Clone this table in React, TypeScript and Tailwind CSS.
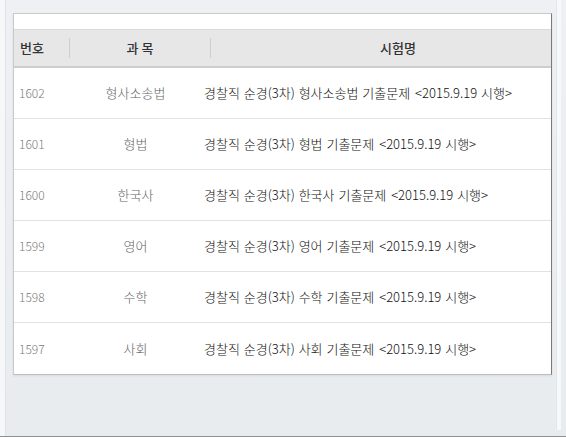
import React from "react";

const rows = [
  { no: "1602", subj: "형사소송법" },
  { no: "1601", subj: "형법" },
  { no: "1600", subj: "한국사" },
  { no: "1599", subj: "영어" },
  { no: "1598", subj: "수학" },
  { no: "1597", subj: "사회" },
];

const font = { fontFamily: '"Noto Sans CJK KR", "Noto Sans", sans-serif' };

export default function App() {
  return (
    <div
      className="w-[566px] h-[437px] bg-gradient-to-b from-[#eef0f3] to-[#e9ecef] border-b border-[#8f8f8f] flex overflow-hidden"
      style={font}
    >
      <div className="w-[6px] h-full bg-[#f6f7f9] border-r border-[#dfe2e6]" />
      <div className="flex-1 flex flex-col pt-[13px] pl-[7px]">
        <div className="flex">
          <div className="w-[539px] h-[362px] bg-white border-t border-l border-[#c9c9c9] border-r border-r-[#7a7a7a] border-b border-b-[#bdbdbd] flex flex-col overflow-hidden shadow-[0_1px_2px_rgba(0,0,0,0.08)]">
            <div className="h-[16px] shrink-0 border-b border-[#dadada]" />
            <div className="h-[38px] shrink-0 bg-[#e7e7e7] border-b-2 border-[#cdcdcd] flex items-center text-[13px] font-medium text-[#333]">
              <div className="w-[55px] pl-[6px] shrink-0">번호</div>
              <div className="w-[141px] shrink-0 h-full flex items-center justify-center border-l border-[#d0d0d0] [border-image:linear-gradient(to_bottom,transparent_25%,#cfcfcf_25%,#cfcfcf_75%,transparent_75%)_1]">
                과 목
              </div>
              <div className="flex-1 h-full flex items-center justify-center pl-[34px] border-l border-[#d0d0d0] [border-image:linear-gradient(to_bottom,transparent_25%,#cfcfcf_25%,#cfcfcf_75%,transparent_75%)_1]">
                시험명
              </div>
            </div>
            {rows.map((r, i) => (
              <div
                key={r.no}
                className={`h-[51px] shrink-0 flex items-center font-light ${i < rows.length - 1 ? "border-b border-[#e2e2e2]" : ""}`}
              >
                <div className="w-[55px] pl-[5px] shrink-0 text-[12px] text-[#7a7a7a]">{r.no}</div>
                <div className="w-[133px] shrink-0 text-center text-[13px] text-[#666]">{r.subj}</div>
                <div className="flex-1 pl-[2px] text-[13px] text-[#111] whitespace-nowrap [word-spacing:1px]">
                  경찰직 순경(3차) {r.subj} 기출문제 <span className="ml-[1px]">&lt;2015.9.19 시행&gt;</span>
                </div>
              </div>
            ))}
          </div>
          <div className="w-[4px]" />
          <div className="w-[5px] h-[430px] -mt-[13px] bg-[#f7f8fa] border-l border-[#e3e6ea]" />
        </div>
      </div>
    </div>
  );
}
